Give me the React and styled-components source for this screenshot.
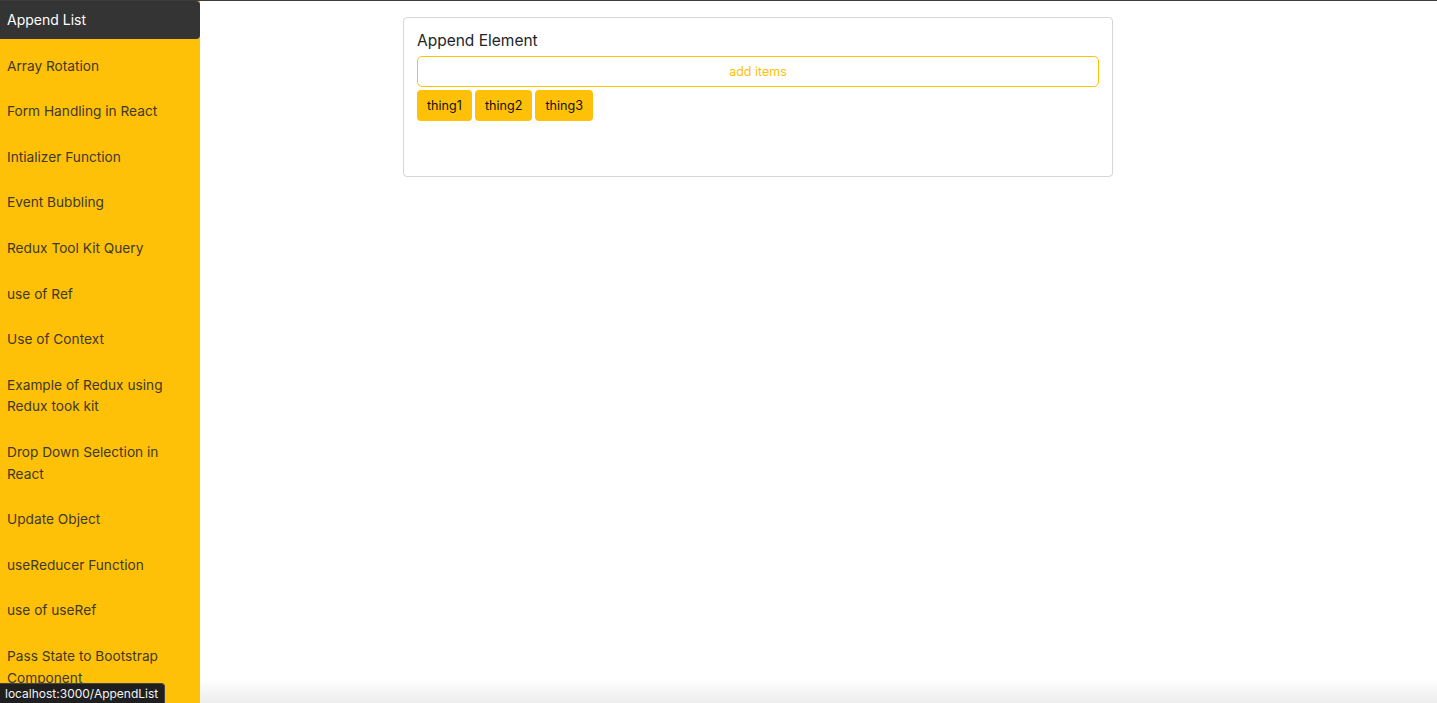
import styled, { createGlobalStyle } from "styled-components";

const GlobalStyle = createGlobalStyle`
  html, body {
    margin: 0;
    padding: 0;
    height: 100%;
    overflow: hidden;
    background: #fff;
    font-family: Inter, "Noto Sans", sans-serif;
  }
`;

const links = [
  "Append List",
  "Array Rotation",
  "Form Handling in React",
  "Intializer Function",
  "Event Bubbling",
  "Redux Tool Kit Query",
  "use of Ref",
  "Use of Context",
  "Example of Redux using Redux took kit",
  "Drop Down Selection in React",
  "Update Object",
  "useReducer Function",
  "use of useRef",
  "Pass State to Bootstrap Component",
];

const things = ["thing1", "thing2", "thing3"];

const App = () => {
  return (
    <>
      <GlobalStyle />
      <Page>
        <Sidebar>
          {links.map((l, i) => (
            <NavItem key={l} active={i === 0}>{l}</NavItem>
          ))}
        </Sidebar>
        <Main>
          <Card>
            <CardTitle>Append Element</CardTitle>
            <ItemInput placeholder="add items" />
            <ThingRow>
              {things.map((t) => (
                <ThingButton key={t}>{t}</ThingButton>
              ))}
            </ThingRow>
          </Card>
        </Main>
      </Page>
      <BottomShade />
      <StatusBar>localhost:3000/AppendList</StatusBar>
    </>
  );
};

export default App;

const Page = styled.div`
  display: flex;
  height: 703px;
  border-top: 1px solid #3c3c3c;
  box-sizing: border-box;
`;

const Sidebar = styled.nav`
  width: 200px;
  flex-shrink: 0;
  background: #ffc107;
  display: flex;
  flex-direction: column;
  overflow: hidden;
`;

const NavItem = styled.div`
  padding: ${(p) => (p.active ? "8px 7px 8px 7px" : "12px 36px 12px 7px")};
  margin-bottom: ${(p) => (p.active ? "5px" : "0")};
  font-size: ${(p) => (p.active ? "14px" : "13.7px")};
  line-height: 21.6px;
  color: ${(p) => (p.active ? "#ffffff" : "#40392a")};
  background: ${(p) => (p.active ? "#343434" : "transparent")};
  border-radius: ${(p) => (p.active ? "0 4px 4px 0" : "0")};
  cursor: pointer;
`;

const Main = styled.main`
  flex: 1;
  padding: 16px 0 0 203px;
`;

const Card = styled.section`
  width: 710px;
  height: 160px;
  box-sizing: border-box;
  border: 1px solid #d6d6d6;
  border-radius: 4px;
  padding: 13px 13px;
`;

const CardTitle = styled.h5`
  margin: 0 0 5px;
  font-size: 15.5px;
  font-weight: 400;
  line-height: 20px;
  color: #212529;
`;

const ItemInput = styled.input`
  display: block;
  width: 100%;
  height: 31px;
  box-sizing: border-box;
  border: 1px solid #ffc107;
  border-radius: 5px;
  text-align: center;
  font-family: Inter, "Noto Sans", sans-serif;
  font-size: 12.5px;
  outline: none;
  &::placeholder {
    color: #ffc107;
  }
`;

const ThingRow = styled.div`
  display: flex;
  gap: 3px;
  margin-top: 3px;
`;

const ThingButton = styled.button`
  height: 31px;
  padding: 0 10px;
  border: none;
  border-radius: 4px;
  background: #ffc107;
  color: #111;
  font-family: Inter, "Noto Sans", sans-serif;
  font-size: 12.6px;
  cursor: pointer;
`;

const BottomShade = styled.div`
  position: fixed;
  left: 200px;
  right: 0;
  bottom: 0;
  height: 24px;
  background: linear-gradient(to bottom, rgba(0, 0, 0, 0), rgba(0, 0, 0, 0.07));
  pointer-events: none;
`;

const StatusBar = styled.div`
  position: fixed;
  left: 0;
  bottom: 0;
  height: 19px;
  padding: 0 6px 0 5px;
  background: #1f1f1f;
  color: #f2f2f2;
  font-size: 12px;
  line-height: 19px;
  border-top-right-radius: 4px;
  border: 1px solid #444;
  border-left: none;
  border-bottom: none;
`;
